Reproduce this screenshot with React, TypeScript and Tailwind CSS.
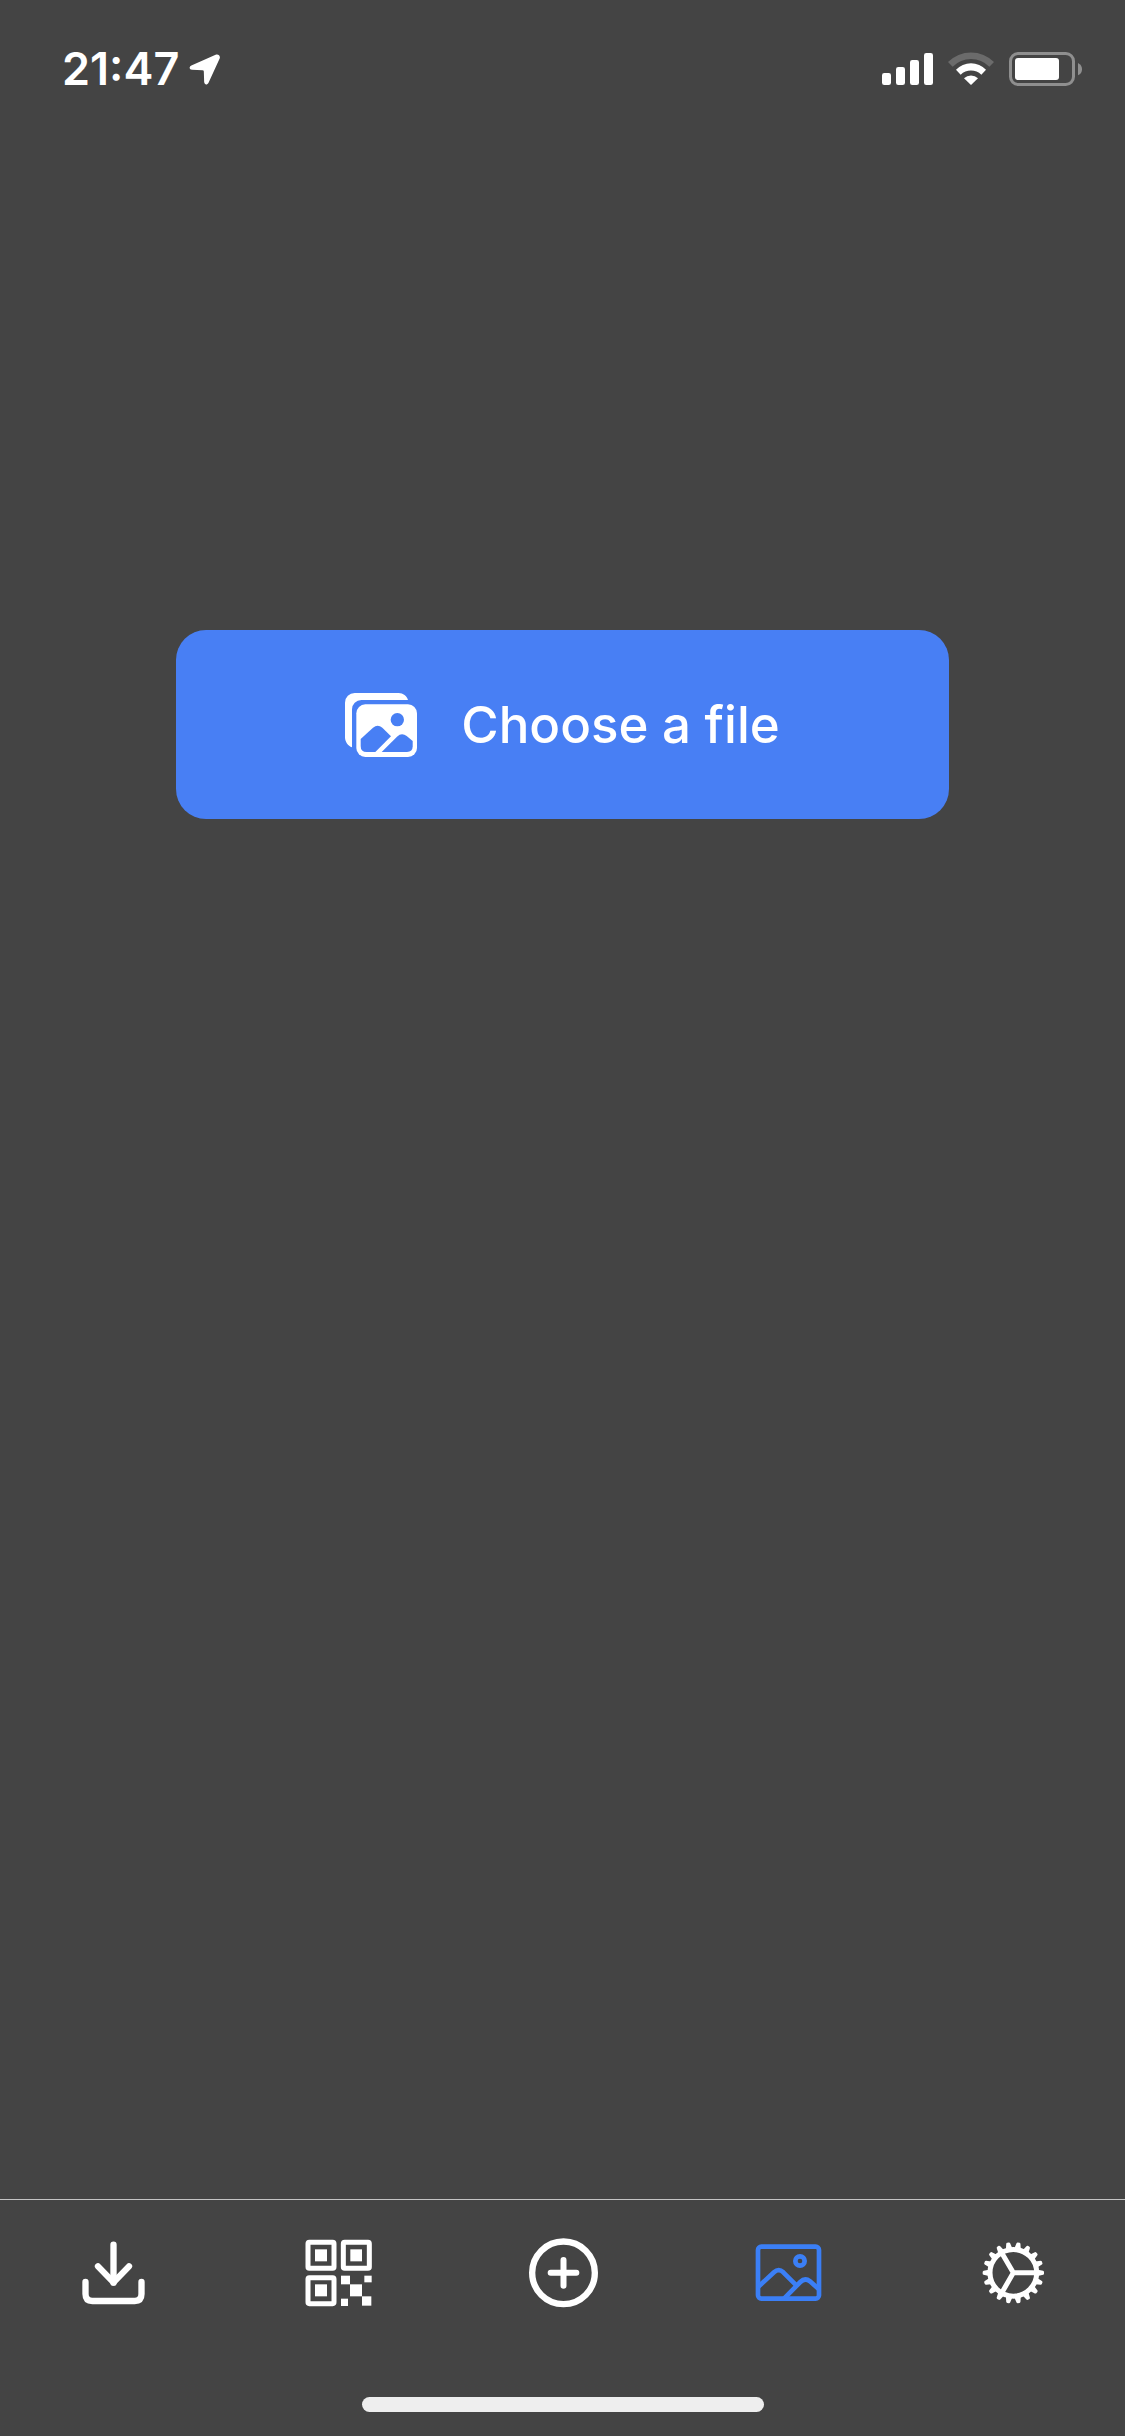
import type { ReactNode } from "react";

const gearTeeth = Array.from({ length: 18 }, (_, i) => i * 20);

function TabIcon({ children }: { children: ReactNode }) {
  return (
    <svg viewBox="-6 0 330 330" className="size-[110px]" fill="none" aria-hidden="true">
      {children}
    </svg>
  );
}

function DownloadIcon() {
  return (
    <TabIcon>
      <g stroke="currentColor" strokeWidth="19" strokeLinecap="round" strokeLinejoin="round">
        <path d="M160.500 74V188" />
        <path d="M114 139L160.500 187L207 139" />
        <path d="M76.500 186V222Q76.500 243 97 243H224Q244.500 243 244.500 222V186" />
      </g>
    </TabIcon>
  );
}

function QrIcon() {
  return (
    <TabIcon>
      <g stroke="currentColor" strokeWidth="15">
        <rect x="69" y="67" width="78" height="78" rx="4" />
        <rect x="175" y="67" width="78" height="78" rx="4" />
        <rect x="69" y="173" width="78" height="78" rx="4" />
      </g>
      <g fill="currentColor">
        <rect x="90" y="88" width="36" height="36" />
        <rect x="196" y="88" width="35" height="36" />
        <rect x="90" y="193" width="36" height="36" />
        <rect x="168" y="167" width="27" height="26" />
        <rect x="238" y="167" width="22" height="20" />
        <rect x="195" y="193" width="36" height="36" />
        <rect x="231" y="229" width="28" height="28" />
        <rect x="168" y="236" width="21" height="22" />
      </g>
    </TabIcon>
  );
}

function PlusIcon() {
  return (
    <TabIcon>
      <circle cx="160.500" cy="158.500" r="94" stroke="currentColor" strokeWidth="19" />
      <path d="M160.500 120V197M122 158.500H199" stroke="currentColor" strokeWidth="18" strokeLinecap="round" />
    </TabIcon>
  );
}

function PictureIcon() {
  return (
    <TabIcon>
      <g stroke="currentColor" strokeWidth="14">
        <rect x="69" y="80" width="183" height="156" rx="10" />
        <circle cx="195" cy="123" r="14" />
        <path d="M69 201L117 157Q131 144 145 157L184 196" />
        <path d="M147 236L196 186Q210 172 225 184L252 208" />
      </g>
    </TabIcon>
  );
}

function GearIcon() {
  return (
    <TabIcon>
      <circle cx="160" cy="158.500" r="70" stroke="currentColor" strokeWidth="15" />
      {gearTeeth.map((angle) => (
        <path
          key={angle}
          d="M234 149L249 152.500Q252 153.500 252 156V161Q252 163.500 249 164.500L234 168Z"
          fill="currentColor"
          transform={`rotate(${angle} 160 158.500)`}
        />
      ))}
      <path d="M160 158.500H230M160 158.500L125 98M160 158.500L125 219" stroke="currentColor" strokeWidth="15" />
    </TabIcon>
  );
}

function GalleryIcon() {
  return (
    <svg viewBox="75 69 216 192" className="h-16 w-[72px]" aria-hidden="true">
      <path
        d="M96 232C84 228 75 216 75 202V98A29 29 0 0 1 104 69H236C249 69 261 78 264 90H124A28 28 0 0 0 96 118Z"
        fill="white"
      />
      <rect x="109" y="103" width="182" height="158" rx="27" fill="white" />
      <g fill="#487ff4">
        <circle cx="232" cy="149" r="20" />
        <path d="M122 207L159 173Q173 161 187 173L213 199L166 246H140Q122 246 122 228Z" />
        <path d="M185 246L231 200Q245 187 260 198L278 213V229Q278 246 261 246Z" />
      </g>
    </svg>
  );
}

function StatusBar() {
  return (
    <header className="flex h-[132px] items-start justify-between pr-[43px] pl-[62px] pt-[42px] text-white">
      <div className="flex h-[54px] items-center gap-[10px]">
        <time className="text-[45px] leading-[54px] font-semibold">21:47</time>
        <svg viewBox="446 70 92 92" className="size-[31px]" fill="currentColor" aria-label="Location in use">
          <path d="M525 72L453 104C445 108 447 116 455 117L486 118Q490 118 490 122L491 153C492 162 500 163 504 155L537 83C540 75 533 69 525 72Z" />
        </svg>
      </div>
      <svg
        viewBox="63 48 603 138"
        className="mt-1 h-[46px] w-[201px]"
        role="img"
        aria-label="Signal, Wi-Fi and battery"
      >
        <g fill="white">
          <rect x="66" y="129" width="27" height="36" rx="7" />
          <rect x="108" y="111" width="27" height="54" rx="7" />
          <rect x="150" y="90" width="27" height="75" rx="7" />
          <rect x="192" y="69" width="27" height="96" rx="7" />
          <path d="M333 165L312 145A30 30 0 0 1 354 145Z" />
          <path d="M288 119A62 62 0 0 1 378 119L364 134A45 45 0 0 0 302 134Z" />
          <rect x="465" y="84" width="132" height="66" rx="9" />
        </g>
        <path d="M264 96A97 97 0 0 1 402 96L388 110A78 78 0 0 0 278 110Z" fill="#6b6b6b" />
        <rect x="451.500" y="70.500" width="189" height="93" rx="23" fill="none" stroke="#8f8f8f" strokeWidth="9" />
        <path d="M654 99Q666 105 666 117.500Q666 130 654 136Z" fill="#8f8f8f" />
      </svg>
    </header>
  );
}

const tabs = [
  { label: "Import", icon: <DownloadIcon />, active: false },
  { label: "Codes", icon: <QrIcon />, active: false },
  { label: "Add", icon: <PlusIcon />, active: false },
  { label: "Pictures", icon: <PictureIcon />, active: true },
  { label: "Settings", icon: <GearIcon />, active: false },
];

export default function App() {
  return (
    <div className="flex min-h-screen flex-col bg-[#444444] font-['Inter',sans-serif]">
      <StatusBar />
      <main className="flex-1 px-44 pt-[498px]">
        <button
          type="button"
          className="flex h-[189px] w-full items-center justify-center gap-11 rounded-[30px] bg-[#487ff4] text-white"
        >
          <GalleryIcon />
          <span className="text-[51px] leading-[64px] font-medium">Choose a file</span>
        </button>
      </main>
      <footer className="border-t border-[#c4c4c4]">
        <nav className="grid grid-cols-5 pt-5" aria-label="Sections">
          {tabs.map((tab) => (
            <button
              key={tab.label}
              type="button"
              aria-label={tab.label}
              aria-current={tab.active ? "page" : undefined}
              className={tab.active ? "flex justify-center text-[#3b7ff6]" : "flex justify-center text-white"}
            >
              {tab.icon}
            </button>
          ))}
        </nav>
        <div className="mx-auto mt-[67px] mb-6 h-[15px] w-[402px] rounded-full bg-[#eeeeee]" />
      </footer>
    </div>
  );
}
